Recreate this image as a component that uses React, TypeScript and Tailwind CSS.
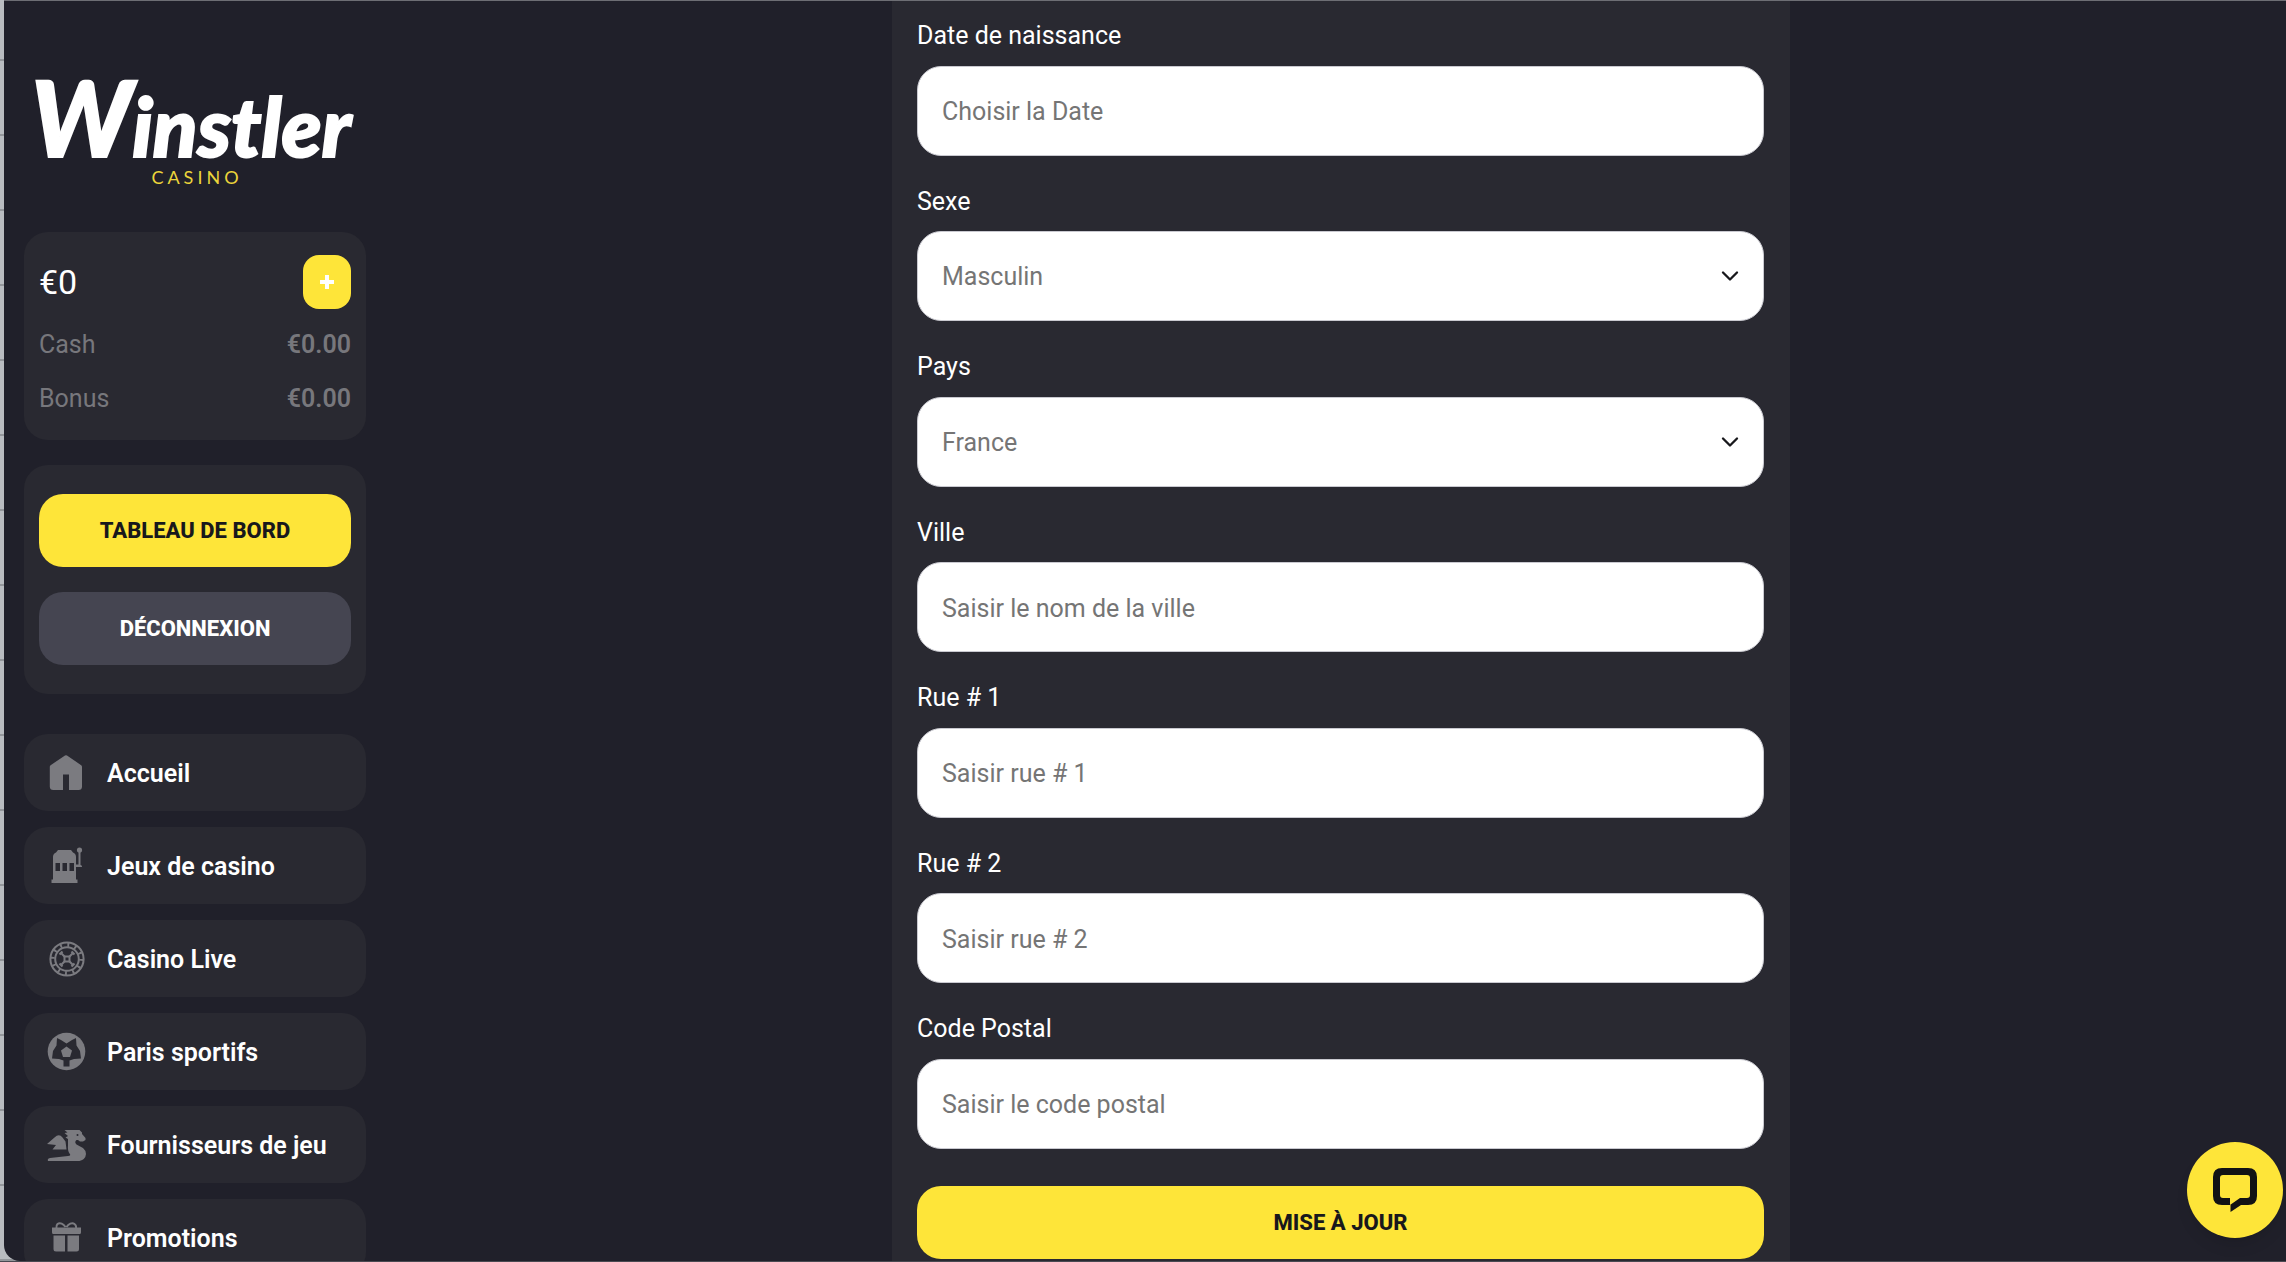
import type { ReactNode } from "react";
import { ChevronDown } from "lucide-react";

type Field = {
  id: string;
  label: string;
  placeholder: string;
  options?: string[];
};

const FIELDS: Field[] = [
  { id: "birthdate", label: "Date de naissance", placeholder: "Choisir la Date" },
  { id: "gender", label: "Sexe", placeholder: "Masculin", options: ["Masculin", "Féminin"] },
  { id: "country", label: "Pays", placeholder: "France", options: ["France", "Belgique", "Suisse"] },
  { id: "city", label: "Ville", placeholder: "Saisir le nom de la ville" },
  { id: "street1", label: "Rue # 1", placeholder: "Saisir rue # 1" },
  { id: "street2", label: "Rue # 2", placeholder: "Saisir rue # 2" },
  { id: "zip", label: "Code Postal", placeholder: "Saisir le code postal" },
];

function HomeIcon() {
  return (
    <svg viewBox="0 0 40 40" className="size-10" fill="currentColor" aria-hidden="true">
      <path d="M18 2.6Q19 2 20 2.6L34.2 12.2Q35 12.8 35 13.8V33.5Q35 37 31.5 37H22V21.5H16V37H6.3Q2.8 37 2.8 33.5V13.8Q2.8 12.8 3.6 12.2Z" />
    </svg>
  );
}

function SlotIcon() {
  return (
    <svg viewBox="0 0 40 40" className="size-10" fill="currentColor" aria-hidden="true">
      <path
        fillRule="evenodd"
        d="M6 11Q6 7.5 9 6.5L11 4H24L26 6.5Q29 7.5 29 11V18.5H31.5V5H33.5V19Q35 19 35 20.5V21H29V33.5H30.5V37H4.5V33.5H6ZM8.5 17V25H13V17ZM15.5 17V25H20V17ZM22.5 17V25H27V17Z"
      />
      <circle cx="32.5" cy="4" r="2.6" />
    </svg>
  );
}

function RouletteIcon() {
  return (
    <svg viewBox="0 0 40 40" className="size-10" fill="none" stroke="currentColor" aria-hidden="true">
      <circle cx="20" cy="20" r="16.6" strokeWidth="2" />
      <circle cx="20" cy="20" r="11.8" strokeWidth="2" />
      <circle cx="20" cy="20" r="14.2" strokeWidth="4" strokeDasharray="1.9 5.53" />
      <path d="m14 14 4 4M26 14l-4 4M14 26l4-4M26 26l-4-4" strokeWidth="2" />
      <path d="m12.5 15.5 3-3M24.5 12.5l3 3M12.5 24.5l3 3M27.5 24.5l-3 3" strokeWidth="2.2" />
      <rect x="17.5" y="17.5" width="5" height="5" strokeWidth="2" />
    </svg>
  );
}

function BallIcon() {
  return (
    <svg viewBox="0 0 40 40" className="size-10" fill="currentColor" aria-hidden="true">
      <circle cx="19.5" cy="19.5" r="18.8" />
      <path
        className="fill-[#292931]"
        d="M10 6 14 8 19.500 11.500 25 8 29 6 29.500 13.500 33 19 34 26.500 27 27 22.500 28.500 22.500 34.500H16.500V28.500L12 27 5 26.500 6 19 9.500 13.500Z"
      />
      <path d="m19.5 14.5 5.5 4-2 6.5h-7l-2-6.500Z" />
    </svg>
  );
}

function DragonIcon() {
  return (
    <svg viewBox="0 0 40 40" className="size-10" fill="currentColor" aria-hidden="true">
      <path d="M17.5 5H32.5L35 7.5V9L38.5 13V15L36 16.5H33L31 15H29.5Q27 17 29.500 19.500L36 23Q39 25.500 39 29 38.500 34.500 32.500 36H1Q0 33.500 3 33L21 31Q24.500 30.500 22.500 28.500 20.500 26 21 20V14L18.500 12.500 21 11 17.500 8 20.500 7.500Z" />
      <path d="M0 19 7.5 12.5Q12 8 15.5 12.5L18.5 16.5 19.500 24.500H5.500L9 20 4.500 19.500Z" />
      <circle cx="30.5" cy="10" r="1" className="fill-[#292931]" />
    </svg>
  );
}

function GiftIcon() {
  return (
    <svg viewBox="0 0 40 40" className="size-10" fill="currentColor" aria-hidden="true">
      <path d="M5 9.500H34V14.500Q34 16 32.500 16H6.500Q5 16 5 14.500ZM6.500 17.500H18V33.500H9Q6.500 33.500 6.500 31ZM20.500 17.500H32V31Q32 33.500 29.500 33.500H20.500Z" />
      <path
        d="M18.5 9C16.5 6 13 4 10.5 6Q9 7.5 9.5 10M19.5 9C21.5 6 25 4 27.5 6Q29.500 7.500 29 10"
        fill="none"
        stroke="currentColor"
        strokeWidth="2"
      />
    </svg>
  );
}

const NAV: { label: string; icon: ReactNode }[] = [
  { label: "Accueil", icon: <HomeIcon /> },
  { label: "Jeux de casino", icon: <SlotIcon /> },
  { label: "Casino Live", icon: <RouletteIcon /> },
  { label: "Paris sportifs", icon: <BallIcon /> },
  { label: "Fournisseurs de jeu", icon: <DragonIcon /> },
  { label: "Promotions", icon: <GiftIcon /> },
];

function Logo() {
  return (
    <a href="#" className="flex h-[231px] flex-col items-center pt-16 pr-2 font-['Lato',sans-serif]">
      <span className="text-[82px] leading-[80px] font-black text-white italic [-webkit-text-stroke:2px_#fff]">
        <span className="text-[104px] leading-none">W</span>instler
      </span>
      <span className="-mt-1 pl-3 text-[18px] leading-6 tracking-[4px] text-[#ecd53a]">CASINO</span>
    </a>
  );
}

function Balance() {
  return (
    <section className="rounded-3xl bg-[#292931] px-[15px] pt-[23px] pb-[14px]">
      <div className="flex h-[54px] items-center justify-between">
        <span className="text-[34px] leading-none text-white">€0</span>
        <button
          type="button"
          aria-label="Déposer"
          className="flex h-[54px] w-12 items-center justify-center rounded-2xl bg-[#fee539] text-white"
        >
          <svg viewBox="0 0 14 14" className="size-[14px]" stroke="currentColor" strokeWidth="4" aria-hidden="true">
            <path d="M7 0v14M0 7h14" />
          </svg>
        </button>
      </div>
      <dl className="mt-[9px] text-[25px] leading-[54px] text-[#77777c]">
        <div className="flex justify-between">
          <dt>Cash</dt>
          <dd className="font-semibold">€0.00</dd>
        </div>
        <div className="flex justify-between">
          <dt>Bonus</dt>
          <dd className="font-semibold">€0.00</dd>
        </div>
      </dl>
    </section>
  );
}

function Sidebar() {
  return (
    <aside className="w-[392px] shrink-0 pr-[30px] pl-5">
      <Logo />
      <Balance />
      <section className="mt-[25px] flex flex-col gap-[25px] rounded-3xl bg-[#292931] px-[15px] py-[29px]">
        <button type="button" className="h-[73px] rounded-3xl bg-[#fee539] text-[22px] font-extrabold text-[#18181c]">
          TABLEAU DE BORD
        </button>
        <button type="button" className="h-[73px] rounded-3xl bg-[#454551] text-[22px] font-extrabold text-white">
          DÉCONNEXION
        </button>
      </section>
      <nav className="mt-10 flex flex-col gap-4">
        {NAV.map((item) => (
          <a
            key={item.label}
            href="#"
            className="flex h-[77px] shrink-0 items-center gap-5 rounded-3xl bg-[#292931] pl-[23px] text-[25px] font-semibold whitespace-nowrap text-white"
          >
            <span className="shrink-0 text-[#7b7b80]">{item.icon}</span>
            <span className="pt-0.5">{item.label}</span>
          </a>
        ))}
      </nav>
    </aside>
  );
}

function FormField({ field }: { field: Field }) {
  const box =
    "h-[90px] w-full rounded-3xl border border-[#c9c9d0] bg-white px-6 pt-0.5 text-[25px] text-[#757575] outline-none placeholder:text-[#757575]";

  return (
    <div className="flex flex-col gap-[11px]">
      <label htmlFor={field.id} className="text-[25px] leading-normal text-white">
        {field.label}
      </label>
      {field.options ? (
        <div className="relative">
          <select id={field.id} className={`${box} appearance-none`}>
            {field.options.map((option) => (
              <option key={option}>{option}</option>
            ))}
          </select>
          <ChevronDown
            className="pointer-events-none absolute top-[31px] right-5 size-7 text-[#18181c]"
            strokeWidth={2}
            aria-hidden="true"
          />
        </div>
      ) : (
        <input id={field.id} type="text" placeholder={field.placeholder} className={box} />
      )}
    </div>
  );
}

function ChatButton() {
  return (
    <button
      type="button"
      aria-label="Chat"
      className="fixed right-[3px] bottom-6 flex size-24 items-center justify-center rounded-full bg-[#fee539] text-[#121214] shadow-lg"
    >
      <svg viewBox="0 0 44 44" className="size-11" fill="currentColor" aria-hidden="true">
        <path
          fillRule="evenodd"
          d="M9 0H35Q44 0 44 9V28Q44 37 35 37H28L17.5 44V37H9Q0 37 0 28V9Q0 0 9 0ZM10 7Q7 7 7 10V27Q7 30 10 30H17V37L27 30H34Q37 30 37 27V10Q37 7 34 7Z"
        />
      </svg>
    </button>
  );
}

export default function App() {
  return (
    <div className="h-screen overflow-hidden border-b border-[#4a4a52] bg-[repeating-linear-gradient(#b9bcc0_0_59px,#93969a_59px_61px,#b9bcc0_61px_75px)] pl-1 font-['Roboto','Liberation_Sans',sans-serif]">
      <div className="flex h-full overflow-hidden rounded-bl-2xl border-t border-[#6d6e74] bg-[#20202a]">
        <Sidebar />
        <main className="min-w-0 flex-1">
          <form className="mx-auto flex max-w-[898px] flex-col gap-[27px] bg-[#292931] pt-4 pr-[26px] pb-10 pl-[25px]">
            {FIELDS.map((field) => (
              <FormField key={field.id} field={field} />
            ))}
            <button
              type="submit"
              className="mt-[10px] h-[73px] rounded-3xl bg-[#fee539] text-[22px] font-extrabold text-[#18181c]"
            >
              MISE À JOUR
            </button>
          </form>
        </main>
      </div>
      <ChatButton />
    </div>
  );
}
